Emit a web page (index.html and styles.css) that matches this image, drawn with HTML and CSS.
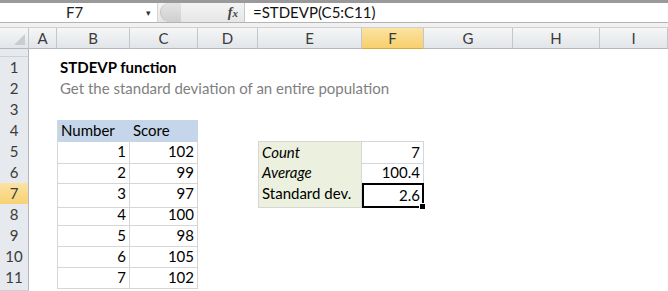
FILE: index.html
```html
<!DOCTYPE html>
<html lang="en">
<head>
    <meta charset="UTF-8">
    <title>STDEVP function</title>
    <link rel="stylesheet" href="styles.css">
</head>
<body>
    <div class="topline"></div>
    <div class="formula-bar">
        <div class="name-box">F7<span class="dropdown">&#9662;</span></div>
        <div class="fb-mid">
            <span class="knob"></span>
            <span class="fx">f<i>x</i></span>
        </div>
        <div class="formula">=STDEVP(C5:C11)</div>
    </div>
    <div class="gap"></div>

    <div class="sheet">
        <div class="row col-heads">
            <div class="corner"><span class="tri"></span></div>
            <div>A</div><div>B</div><div>C</div><div>D</div><div>E</div>
            <div class="active">F</div><div>G</div><div>H</div><div>I</div>
        </div>
        <div class="row strip">
            <div class="rh"></div>
        </div>

        <div class="row">
            <div class="rh">1</div><div></div>
            <div class="title">STDEVP function</div>
        </div>
        <div class="row">
            <div class="rh">2</div><div></div>
            <div class="subtitle">Get the standard deviation of an entire population</div>
        </div>
        <div class="row">
            <div class="rh">3</div>
        </div>
        <div class="row">
            <div class="rh">4</div><div></div>
            <div class="c th first">Number</div><div class="c th">Score</div>
        </div>
        <div class="row">
            <div class="rh">5</div><div></div>
            <div class="c num first">1</div><div class="c num">102</div><div></div>
            <div class="c lbl first top"><i>Count</i></div><div class="c num top">7</div>
        </div>
        <div class="row">
            <div class="rh">6</div><div></div>
            <div class="c num first">2</div><div class="c num">99</div><div></div>
            <div class="c lbl first"><i>Average</i></div><div class="c num">100.4</div>
        </div>
        <div class="row">
            <div class="rh active">7</div><div></div>
            <div class="c num first">3</div><div class="c num">97</div><div></div>
            <div class="c lbl first">Standard dev.</div>
            <div class="c num selected">2.6<span class="handle"></span></div>
        </div>
        <div class="row">
            <div class="rh">8</div><div></div>
            <div class="c num first">4</div><div class="c num">100</div>
        </div>
        <div class="row">
            <div class="rh">9</div><div></div>
            <div class="c num first">5</div><div class="c num">98</div>
        </div>
        <div class="row">
            <div class="rh">10</div><div></div>
            <div class="c num first">6</div><div class="c num">105</div>
        </div>
        <div class="row">
            <div class="rh">11</div><div></div>
            <div class="c num first">7</div><div class="c num">102</div>
        </div>
        <div class="row tail">
            <div class="rh"></div>
        </div>
    </div>
</body>
</html>
```

FILE: styles.css
```css
body {
    margin: 0;
    font-family: Lato, "Liberation Sans", sans-serif;
    font-size: 15px;
    color: #000;
    background: #fff;
    overflow: hidden;
}
.topline {
    height: 3px;
    background: #9a9a9a;
}
.formula-bar {
    display: flex;
    height: 19px;
    border-bottom: 1px solid #b4b4b4;
    background: #fff;
}
.name-box {
    position: relative;
    width: 157px;
    padding-left: 66px;
    box-sizing: border-box;
    line-height: 19px;
    color: #222;
}
.dropdown {
    position: absolute;
    left: 146px;
    top: 0;
    font-size: 9px;
    color: #333;
}
.fb-mid {
    display: flex;
    align-items: center;
    width: 88px;
    background: linear-gradient(#f4f4f4, #e6e6e6);
    border-left: 1px solid #d4d4d4;
    border-right: 1px solid #c8c8c8;
    box-sizing: border-box;
}
.knob {
    width: 20px;
    height: 19px;
    margin-left: 2px;
    border-radius: 10px 0 0 10px;
    background: linear-gradient(#e4e4e4, #cfcfcf);
    border-left: 1px solid #c2c2c2;
}
.fx {
    margin-left: auto;
    margin-right: 6px;
    font-family: "Liberation Serif", serif;
    font-style: italic;
    font-weight: bold;
    font-size: 14px;
    color: #444;
}
.fx i {
    font-size: 11px;
}
.formula {
    flex: 1;
    padding-left: 8px;
    line-height: 19px;
    color: #111;
}
.gap {
    height: 4px;
    background: #f1f1f1;
    border-bottom: 1px solid #d0d0d0;
}

.row {
    display: grid;
    grid-template-columns: 29px 28px 73px 68px 60px 104px 62px 89px 87px 1fr;
    height: 21px;
    line-height: 21px;
}
.col-heads {
    height: 20px;
    line-height: 20px;
}
.col-heads div {
    text-align: center;
    color: #3b3b3b;
    background: linear-gradient(#f5f6f7, #e2e5e9);
    border-right: 1px solid #c3c7cc;
    border-bottom: 1px solid #b4b8bd;
}
.col-heads .active {
    background: linear-gradient(#fbe3a3, #f8cf6c);
    border-bottom-color: #d8a940;
}
.corner {
    position: relative;
}
.tri {
    position: absolute;
    right: 3px;
    bottom: 3px;
    width: 0;
    height: 0;
    border-left: 11px solid transparent;
    border-bottom: 11px solid #c9ccd0;
}
.strip {
    height: 9px;
}
.tail {
    height: 3px;
}
.rh {
    text-align: center;
    color: #3b3b3b;
    background: #e6e9ed;
    border-right: 1px solid #b4b8bd;
    border-bottom: 1px solid #cdd1d6;
    box-sizing: border-box;
}
.rh.active {
    background: linear-gradient(#fbe3a3, #f8cf6c);
}

.title {
    grid-column: 3 / 7;
    padding-left: 3px;
    font-weight: bold;
}
.subtitle {
    grid-column: 3 / 8;
    padding-left: 3px;
    color: #7f7f7f;
}
.c {
    padding: 0 3px;
    border-right: 1px solid #d6d6d6;
    border-bottom: 1px solid #d6d6d6;
    box-sizing: border-box;
    white-space: nowrap;
}
.c.first {
    border-left: 1px solid #d6d6d6;
}
.c.top {
    border-top: 1px solid #d6d6d6;
}
.th {
    background: #c5d6ea;
    border-color: #c5d6ea;
}
.num {
    text-align: right;
}
.lbl {
    background: #ebf1de;
}
.selected {
    position: relative;
    border: 2px solid #000;
    padding-right: 2px;
}
.handle {
    position: absolute;
    right: -4px;
    bottom: -4px;
    width: 5px;
    height: 5px;
    background: #000;
    border: 1px solid #fff;
}
```
